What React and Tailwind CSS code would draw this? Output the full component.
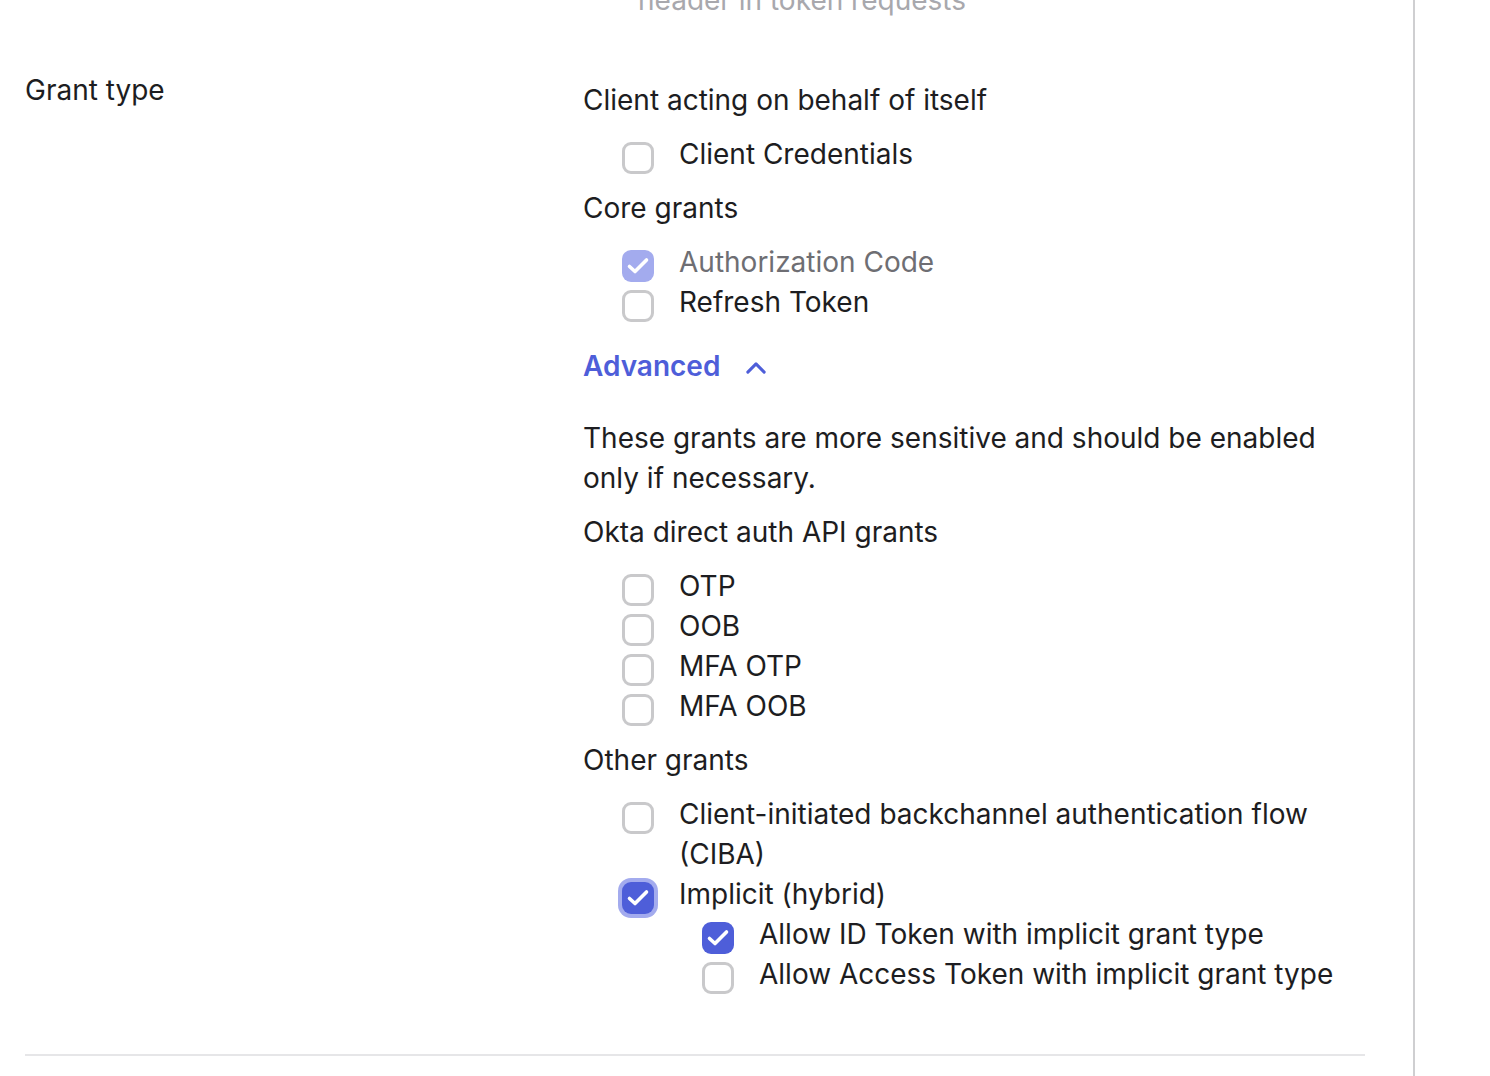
import React from 'react';

const Check = ({ checked, disabled, focused }) => {
  if (!checked) {
    return <span className="block w-8 h-8 rounded-[9px] border-[3px] border-[#c9c9cb] bg-white" />;
  }
  return (
    <span
      className={
        'block w-8 h-8 rounded-[9px] ' +
        (disabled ? 'bg-[#a3abee]' : 'bg-[#4e5ed9]') +
        (focused ? ' ring-4 ring-[#a3abee]' : '')
      }
    >
      <svg width="32" height="32" viewBox="0 0 32 32" fill="none">
        <path d="M7.5 16.5l5.5 5 11.5-11.5" stroke="white" strokeWidth="3.6" strokeLinecap="round" strokeLinejoin="round" />
      </svg>
    </span>
  );
};

const Item = ({ label, checked, disabled, focused, children }) => (
  <li>
    <div className="flex items-start">
      <div className="w-[96px] shrink-0 pl-[39px] pt-[8px] h-10">
        <Check checked={checked} disabled={disabled} focused={focused} />
      </div>
      <span className={'leading-10 ' + (disabled ? 'text-[#6e6e73]' : 'text-[#1d1d21]')}>{label}</span>
    </div>
    {children}
  </li>
);

const SubItem = ({ label, checked }) => (
  <li className="flex items-start">
    <div className="w-[176px] shrink-0 pl-[119px] pt-[8px] h-10">
      <Check checked={checked} />
    </div>
    <span className="leading-10 text-[#1d1d21]">{label}</span>
  </li>
);

const Heading = ({ children }) => (
  <p className="leading-10 text-[#1d1d21] mb-[14px]">{children}</p>
);

export default function App() {
  return (
    <div className="w-[1490px] h-[1076px] overflow-hidden bg-white font-['Inter',sans-serif] text-[28px]">
      <div className="w-[1415px] h-full border-r-2 border-[#cfcfd1] flex flex-col">
        <div className="pl-[638px] -mt-[20px] h-[40px] leading-10 text-[#a8a8ad]">header in token requests</div>

        <div className="pl-[25px] pr-[48px] mt-[50px]">
          <div className="flex border-b-2 border-[#e6e6e8] pb-[60px]">
            <div className="w-[558px] shrink-0 leading-10 text-[#1d1d21]">Grant type</div>
            <div className="flex-1 pt-[10px]">
              <Heading>Client acting on behalf of itself</Heading>
              <ul className="mb-[14px]">
                <Item label="Client Credentials" />
              </ul>
              <Heading>Core grants</Heading>
              <ul>
                <Item label="Authorization Code" checked disabled />
                <Item label="Refresh Token" />
              </ul>

              <button className="flex items-center gap-[22px] mt-[24px] leading-10 font-semibold text-[#4e5ed9]">
                Advanced
                <svg width="28" height="28" viewBox="0 0 24 24" fill="none" className="mt-[4px]">
                  <path d="M5 15.5l7-7 7 7" stroke="#4e5ed9" strokeWidth="2.6" strokeLinecap="round" strokeLinejoin="round" />
                </svg>
              </button>

              <p className="mt-[32px] leading-10 text-[#1d1d21] mb-[14px] pr-[10px]">
                These grants are more sensitive and should be enabled only if necessary.
              </p>
              <Heading>Okta direct auth API grants</Heading>
              <ul className="mb-[14px]">
                <Item label="OTP" />
                <Item label="OOB" />
                <Item label="MFA OTP" />
                <Item label="MFA OOB" />
              </ul>
              <Heading>Other grants</Heading>
              <ul>
                <Item label={<>Client-initiated backchannel authentication flow<br />(CIBA)</>} />
                <Item label="Implicit (hybrid)" checked focused>
                  <ul>
                    <SubItem label="Allow ID Token with implicit grant type" checked />
                    <SubItem label="Allow Access Token with implicit grant type" />
                  </ul>
                </Item>
              </ul>
            </div>
          </div>
        </div>
      </div>
    </div>
  );
}
